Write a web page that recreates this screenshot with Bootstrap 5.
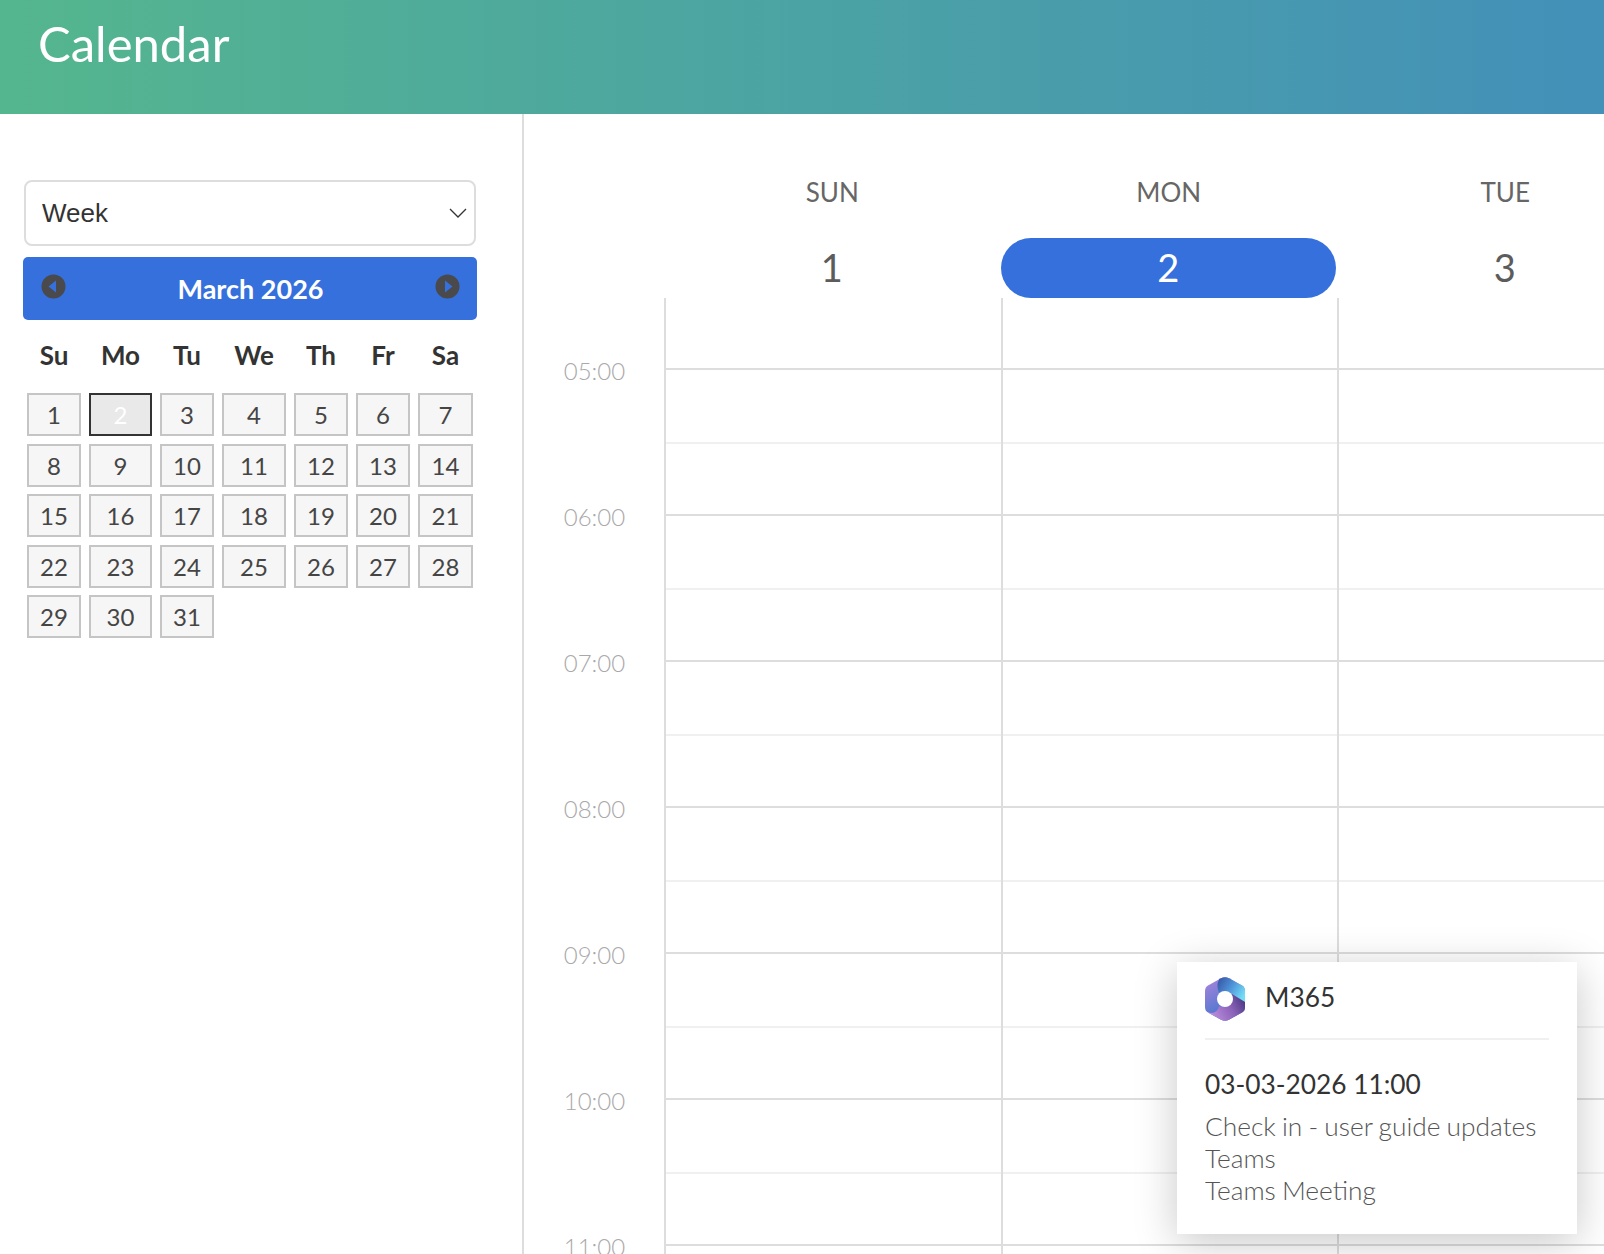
<!DOCTYPE html>
<html lang="en">
<head>
  <meta charset="UTF-8">
  <title>Calendar</title>
  <meta name="viewport" content="width=device-width, initial-scale=1" />
  <link href="https://cdn.jsdelivr.net/npm/bootstrap@5.3.0/dist/css/bootstrap.min.css" rel="stylesheet">
  <style>
    html, body { height: 100%; overflow: hidden; }
    body { font-family: Lato, "Open Sans", sans-serif; color: #333; background: #fff; }

    .app-header { height: 114px; padding: 9px 38px; background: linear-gradient(90deg, #54b68e 0%, #4390b9 100%); }
    .app-header h1 { margin: 0; font-size: 49px; font-weight: 400; line-height: 68px; color: #fff; }

    .app-body { height: 1140px; }
    .side-panel { width: 524px; flex: none; padding: 66px 45px 0 23px; border-right: 2px solid #ddd; }

    .view-select { margin: 0 1px 11px 1px; width: calc(100% - 2px); height: 66px; padding: 0 16px; font-family: "Liberation Sans", sans-serif; font-size: 26px; color: #333; border: 2px solid #ddd; border-radius: 8px;
      background-image: url("data:image/svg+xml,%3csvg xmlns='http://www.w3.org/2000/svg' viewBox='0 0 18 10'%3e%3cpath fill='none' stroke='%23333' stroke-width='1.3' d='M1 1l8 8 8-8'/%3e%3c/svg%3e");
      background-size: 18px 10px; background-position: right 7px center; }

    .month-bar { height: 63px; padding: 0 17px 1px 18px; background: #3570dc; border-radius: 5px; color: #fff; font-size: 27px; font-weight: 700; }
    .month-bar span { margin-top: 2px; }
    .month-bar svg { display: block; margin-top: -4px; }

    .dp-grid { display: grid; grid-template-columns: 54px 63px 54px 64px 54px 54px 55px; column-gap: 8px; row-gap: 7.6px; padding: 0 4px; justify-items: stretch; }
    .dp-names { margin: 17px 0 20px; font-size: 26px; font-weight: 700; line-height: 36px; text-align: center; color: #333; }
    .dp-day { height: 43px; line-height: 39px; text-align: center; font-size: 24px; color: #454545; background: #f6f6f6; border: 2px solid #c5c5c5; }
    .dp-day.is-today { background: #e9e9e9; border-color: #333; color: #fff; }

    .week-view { min-width: 0; }
    .week-head { padding-left: 140px; }
    .day-col { width: 336.5px; flex: none; text-align: center; }
    .day-name { padding-top: 58px; height: 124px; font-size: 26px; line-height: 40px; color: #666; }
    .day-num { height: 60px; font-size: 38px; line-height: 58px; color: #5c5c5c; border-radius: 30px; margin-right: 1px; }
    .day-num.is-current { background: #3570dc; color: #fff; }

    .time-col { width: 140px; flex: none; }
    .time-label { height: 146px; font-size: 24px; font-weight: 300; color: #a9a9a9; text-align: center; display: flex; align-items: center; justify-content: center; padding-left: 1px; }
    .grid-col { width: 336.5px; flex: none; border-left: 2px solid #ddd; }
    .slot { height: 72px; border-bottom: 2px solid #ddd; }
    .slot:nth-child(even) { height: 74px; border-bottom-color: #f0f0f0; }

    .event-pop { position: absolute; left: 1177px; top: 962px; width: 400px; height: 272px; padding: 16px 28px; background: #fff; box-shadow: 0 8px 40px rgba(0, 0, 0, .22); z-index: 5; }
    .event-source { padding-bottom: 16px; border-bottom: 2px solid #f0f0f0; font-size: 26.3px; gap: 21px; }
    .event-source span { margin-top: -4px; margin-left: -1px; }
    .event-source svg { margin-top: -1px; margin-bottom: 1px; }
    .event-when { margin: 26px 0 8px; font-size: 26.3px; line-height: 36px; }
    .event-text { font-size: 26.3px; font-weight: 300; line-height: 32px; color: #555; word-spacing: -1px; }
  </style>
</head>
<body>
  <header class="app-header">
    <h1>Calendar</h1>
  </header>

  <div class="app-body d-flex">
    <!-- Left side: view picker and month -->
    <aside class="side-panel">
      <select class="form-select view-select">
        <option>Week</option>
        <option>Day</option>
        <option>Month</option>
      </select>
      <div class="month-bar d-flex align-items-center justify-content-between">
        <svg width="25" height="25" viewBox="0 0 25 25"><circle cx="12.5" cy="12.5" r="12" fill="#4a4a4c"/><path d="M15 6.500v12l-7.500-6z" fill="#3570dc"/></svg>
        <span>March 2026</span>
        <svg width="25" height="25" viewBox="0 0 25 25"><circle cx="12.5" cy="12.5" r="12" fill="#4a4a4c"/><path d="M10 6.500v12l7.500-6z" fill="#3570dc"/></svg>
      </div>
      <div class="dp-grid dp-names">
        <div>Su</div><div>Mo</div><div>Tu</div><div>We</div><div>Th</div><div>Fr</div><div>Sa</div>
      </div>
      <div class="dp-grid" id="dpDays"></div>
    </aside>

    <!-- Week view -->
    <main class="week-view flex-grow-1 overflow-hidden">
      <div class="week-head d-flex">
        <div class="day-col"><div class="day-name">SUN</div></div>
        <div class="day-col"><div class="day-name">MON</div></div>
        <div class="day-col"><div class="day-name">TUE</div></div>
      </div>
      <div class="week-head d-flex" id="dayNums"></div>
      <div class="d-flex">
        <div class="time-col" id="timeCol"></div>
        <div class="grid-col" data-slots></div>
        <div class="grid-col" data-slots></div>
        <div class="grid-col" data-slots></div>
      </div>
    </main>
  </div>

  <div class="event-pop">
    <div class="event-source d-flex align-items-center">
      <svg width="40" height="44" viewBox="0 0 40 44">
        <defs>
          <linearGradient id="m365a" x1="0" y1="0" x2=".6" y2="1"><stop offset="0" stop-color="#b084dc"/><stop offset="1" stop-color="#2f74cc"/></linearGradient>
          <linearGradient id="m365b" x1="0" y1="0" x2="1" y2=".6"><stop offset="0" stop-color="#35509f"/><stop offset=".5" stop-color="#4c8fd6"/><stop offset="1" stop-color="#74dcf7"/></linearGradient>
          <linearGradient id="m365c" x1="0" y1=".7" x2="1" y2=".3"><stop offset="0" stop-color="#c090e0"/><stop offset=".6" stop-color="#8a62b8"/><stop offset="1" stop-color="#4e3a86"/></linearGradient>
          <clipPath id="m365hex"><path d="M16 1.200Q20-.8 24 1.200L37 8.600Q40 10.400 40 14V30Q40 33.600 37 35.400L24 42.800Q20 44.800 16 42.800L3 35.400Q0 33.600 0 30V14Q0 10.400 3 8.600Z"/></clipPath>
        </defs>
        <g clip-path="url(#m365hex)">
          <rect width="40" height="44" fill="url(#m365a)"/>
          <path d="M13 0H40V27L28 19C26 14 20 12.500 14 15.500C12 11 12 6 14 3Z" fill="url(#m365b)"/>
          <path d="M27 17L40 25V44H3V35C8 37.500 13 34.500 14 29C20 32 26 28 27 22Z" fill="url(#m365c)"/>
        </g>
        <circle cx="20" cy="22" r="8" fill="#fff"/>
      </svg>
      <span>M365</span>
    </div>
    <div class="event-when">03-03-2026 11:00</div>
    <div class="event-text">Check in - user guide updates<br>Teams<br>Teams Meeting</div>
  </div>

  <script>
    // date picker cells
    const dpDays = document.getElementById('dpDays');
    for (let d = 1; d <= 31; d++) {
      const cell = document.createElement('div');
      cell.className = 'dp-day' + (d === 2 ? ' is-today' : '');
      cell.textContent = d;
      dpDays.appendChild(cell);
    }

    // day numbers above the columns
    const dayNums = document.getElementById('dayNums');
    [1, 2, 3].forEach(n => {
      dayNums.innerHTML += `<div class="day-col"><div class="day-num ${n === 2 ? 'is-current' : ''}">${n}</div></div>`;
    });

    // hour labels
    const timeCol = document.getElementById('timeCol');
    ['05:00', '06:00', '07:00', '08:00', '09:00', '10:00', '11:00'].forEach(t => {
      timeCol.innerHTML += `<div class="time-label">${t}</div>`;
    });

    // half hour slots
    document.querySelectorAll('[data-slots]').forEach(col => {
      col.innerHTML = '<div class="slot"></div>'.repeat(14);
    });
  </script>
  <script src="https://cdn.jsdelivr.net/npm/bootstrap@5.3.0/dist/js/bootstrap.bundle.min.js"></script>
</body>
</html>
